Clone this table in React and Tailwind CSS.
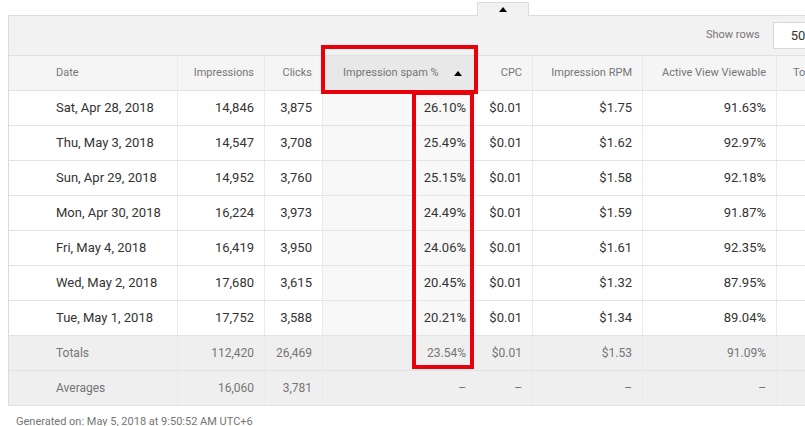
import React from 'react';

const rows = [
  ['Sat, Apr 28, 2018', '14,846', '3,875', '26.10%', '$0.01', '$1.75', '91.63%'],
  ['Thu, May 3, 2018', '14,547', '3,708', '25.49%', '$0.01', '$1.62', '92.97%'],
  ['Sun, Apr 29, 2018', '14,952', '3,760', '25.15%', '$0.01', '$1.58', '92.18%'],
  ['Mon, Apr 30, 2018', '16,224', '3,973', '24.49%', '$0.01', '$1.59', '91.87%'],
  ['Fri, May 4, 2018', '16,419', '3,950', '24.06%', '$0.01', '$1.61', '92.35%'],
  ['Wed, May 2, 2018', '17,680', '3,615', '20.45%', '$0.01', '$1.32', '87.95%'],
  ['Tue, May 1, 2018', '17,752', '3,588', '20.21%', '$0.01', '$1.34', '89.04%'],
];

// ancho de cada columna, desde la izquierda del contenedor
const widths = ['w-[169px]', 'w-[87px]', 'w-[58px]', 'w-[153px]', 'w-[57px]', 'w-[110px]', 'w-[134px]', 'w-[120px]'];

function Row({ cells, variant }) {
  const base =
    variant === 'head'
      ? 'bg-[#f5f5f5] text-[11px] text-[#757575]'
      : variant === 'foot'
      ? 'bg-[#efefef] text-[12px] text-[#757575]'
      : 'bg-white text-[13px] text-[#333]';
  return (
    <div className={`flex h-[35px] border-b border-[#e3e3e3] ${base}`}>
      {cells.map((c, i) => {
        const sorted = i === 3;
        let bg = '';
        if (sorted && variant === 'head') bg = 'bg-[#e8e8e8]';
        if (sorted && variant === 'body') bg = 'bg-[#f8f8f8]';
        let align = 'justify-end pr-[10px]';
        if (i === 0) align = 'justify-start pl-[47px]';
        else if (sorted && variant === 'head') align = 'justify-start pl-[20px]';
        else if (i === 7) align = 'justify-start pl-[16px]';
        return (
          <div
            key={i}
            className={`${widths[i]} shrink-0 flex items-center ${align} ${bg} ${i === 3 ? '' : 'border-r border-[#eaeaea]'} whitespace-nowrap`}
          >
            {c}
            {sorted && variant === 'head' && (
              <span className="ml-[15px] inline-block w-0 h-0 border-l-[4px] border-r-[4px] border-b-[5px] border-l-transparent border-r-transparent border-b-black" />
            )}
          </div>
        );
      })}
    </div>
  );
}

export default function App() {
  return (
    <div className="w-[805px] h-[426px] overflow-hidden bg-white font-['Roboto',_'Liberation_Sans',_sans-serif]">
      {/* pestaña superior */}
      <div className="h-[15px] pt-[2px] pl-[477px]">
        <div className="w-[52px] h-[14px] bg-[#f2f2f2] border border-b-0 border-[#dcdcdc] flex justify-center pt-[4px] relative z-10">
          <span className="w-0 h-0 border-l-[4px] border-r-[4px] border-b-[5px] border-l-transparent border-r-transparent border-b-black" />
        </div>
      </div>

      <div className="relative ml-[8px] w-[900px] border-l border-t border-[#dcdcdc]">
        {/* barra de herramientas */}
        <div className="h-[40px] bg-[#f2f2f2] border-b border-[#e0e0e0] flex items-center">
          <span className="ml-[697px] text-[11px] text-[#757575]">Show rows</span>
          <div className="ml-[13px] h-[27px] w-[80px] bg-white border border-[#d6d6d6] flex items-center pl-[17px] text-[13px] text-[#333]">
            50
          </div>
        </div>

        <Row
          variant="head"
          cells={['Date', 'Impressions', 'Clicks', 'Impression spam %', 'CPC', 'Impression RPM', 'Active View Viewable', 'To']}
        />
        {rows.map((r) => (
          <Row key={r[0]} variant="body" cells={[...r, '']} />
        ))}
        <Row variant="foot" cells={['Totals', '112,420', '26,469', '23.54%', '$0.01', '$1.53', '91.09%', '']} />
        <Row variant="foot" cells={['Averages', '16,060', '3,781', '–', '–', '–', '–', '']} />

        {/* recuadros rojos de resaltado */}
        <div className="absolute left-[312px] top-[29px] w-[157px] h-[49px] border-[4px] border-[#e8000b] pointer-events-none" />
        <div className="absolute left-[403px] top-[75px] w-[62px] h-[278px] border-[4px] border-[#e8000b] pointer-events-none" />
      </div>

      <p className="mt-[8px] ml-[16px] text-[11px] text-[#757575]">Generated on: May 5, 2018 at 9:50:52 AM UTC+6</p>
    </div>
  );
}
